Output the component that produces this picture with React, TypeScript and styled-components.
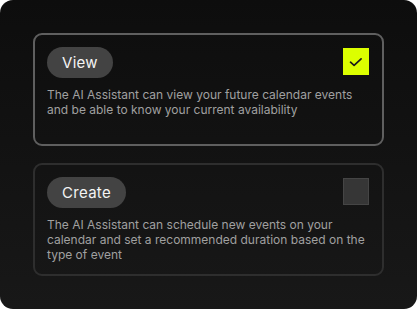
import React from 'react';
import styled, { createGlobalStyle } from 'styled-components';

const GlobalStyle = createGlobalStyle`
  html, body {
    margin: 0;
    padding: 0;
    background: #ffffff;
  }
`;

const Panel = styled.div`
  box-sizing: border-box;
  width: 417px;
  height: 309px;
  padding: 33px 33px;
  border-radius: 13px;
  background: linear-gradient(180deg, #0d0d0d 0%, #181818 100%);
  display: flex;
  flex-direction: column;
  gap: 17px;
  font-family: Inter, 'Liberation Sans', sans-serif;
`;

const Card = styled.div<{ $active: boolean }>`
  box-sizing: border-box;
  height: 113px;
  padding: 12px 12px;
  border: 2px solid ${(p) => (p.$active ? '#5f5f5f' : '#2e2e2e')};
  border-radius: 9px;
  display: flex;
  flex-direction: column;
  gap: 9px;
`;

const Header = styled.div`
  display: flex;
  justify-content: space-between;
  align-items: flex-start;
`;

const Pill = styled.span`
  height: 31px;
  padding: 0 15px;
  border-radius: 16px;
  background: #434343;
  color: #f4f4f4;
  font-size: 15px;
  font-weight: 400;
  display: inline-flex;
  align-items: center;
  letter-spacing: 0.3px;
`;

const Check = styled.span<{ $checked: boolean }>`
  box-sizing: border-box;
  width: 26px;
  height: 27px;
  margin-top: 1px;
  margin-right: 1px;
  background: ${(p) => (p.$checked ? '#dcff00' : '#363636')};
  border: 1px solid ${(p) => (p.$checked ? '#dcff00' : '#454545')};
  display: flex;
  align-items: center;
  justify-content: center;
`;

const Desc = styled.p`
  margin: 0;
  font-size: 12px;
  line-height: 15px;
  color: #a0a0a0;
`;

const perms = [
  {
    label: 'View',
    on: true,
    text: 'The AI Assistant can view your future calendar events and be able to know your current availability',
  },
  {
    label: 'Create',
    on: false,
    text: 'The AI Assistant can schedule new events on your calendar and set a recommended duration based on the type of event',
  },
];

const App: React.FC = () => (
  <>
    <GlobalStyle />
    <Panel>
      {perms.map((p) => (
        <Card key={p.label} $active={p.on}>
          <Header>
            <Pill>{p.label}</Pill>
            <Check $checked={p.on}>
              {p.on && (
                <svg width="16" height="16" viewBox="0 0 16 16">
                  <path d="M2.5 8.2l3.6 3.2 7-6.6" fill="none" stroke="#1a1a1a" strokeWidth="1.7" strokeLinecap="round" strokeLinejoin="round" />
                </svg>
              )}
            </Check>
          </Header>
          <Desc>{p.text}</Desc>
        </Card>
      ))}
    </Panel>
  </>
);

export default App;
